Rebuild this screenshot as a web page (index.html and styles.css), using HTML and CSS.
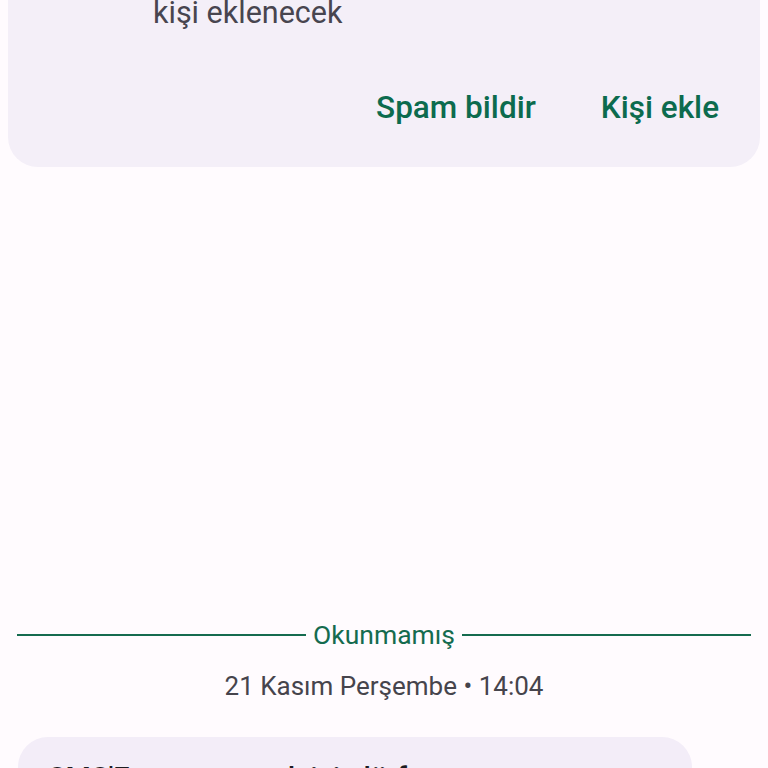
FILE: index.html
```html
<!DOCTYPE html>
<html lang="tr">
<head>
<meta charset="utf-8">
<link rel="stylesheet" href="styles.css">
</head>
<body>
<div class="screen">
  <section class="card">
    <p class="card-text">kişi eklenecek</p>
    <div class="actions">
      <span class="action">Spam bildir</span>
      <span class="action">Kişi ekle</span>
    </div>
  </section>
  <div class="spacer"></div>
  <div class="divider">
    <span class="line"></span>
    <span class="divider-label">Okunmamış</span>
    <span class="line"></span>
  </div>
  <p class="date">21 Kasım Perşembe • 14:04</p>
  <div class="bubble">
    <p class="bubble-text">SMS'E yanıt vermek için lütfen arayın</p>
  </div>
</div>
</body>
</html>
```
FILE: styles.css
```css
html, body {
  margin: 0;
  padding: 0;
  background: #fffbfe;
}
body {
  font-family: Roboto, "Noto Sans", sans-serif;
  width: 768px;
  height: 768px;
  overflow: hidden;
}
.screen {
  display: flex;
  flex-direction: column;
  height: 768px;
  overflow: hidden;
}
.card {
  flex: none;
  margin: 0 8px;
  background: #f4eff8;
  border-radius: 0 0 30px 30px;
  padding: 0 41px 0 145px;
  height: 167px;
  box-sizing: border-box;
}
.card-text {
  margin: -5px 0 0;
  font-size: 30.5px;
  line-height: 36px;
  color: #48454f;
}
.actions {
  display: flex;
  justify-content: flex-end;
  gap: 65px;
  margin-top: 57px;
}
.action {
  font-size: 31.5px;
  line-height: 40px;
  font-weight: 500;
  color: #0c6b4e;
}
.spacer {
  height: 450px;
  flex: none;
}
.divider {
  flex: none;
  display: flex;
  align-items: center;
  gap: 7px;
  padding: 0 17px;
  height: 36px;
}
.line {
  flex: 1;
  height: 2px;
  background: #156b4f;
}
.divider-label {
  font-size: 26.5px;
  color: #156b4f;
  line-height: 36px;
}
.date {
  flex: none;
  margin: 16px 0 0;
  text-align: center;
  font-size: 26px;
  line-height: 34px;
  color: #46444c;
}
.bubble {
  flex: none;
  margin: 34px 76px 0 18px;
  background: #f3edf8;
  border-radius: 30px;
  padding: 21px 30px 18px;
}
.bubble-text {
  margin: 0;
  font-size: 29px;
  font-weight: 500;
  line-height: 40px;
  color: #1c1b1f;
}
```
